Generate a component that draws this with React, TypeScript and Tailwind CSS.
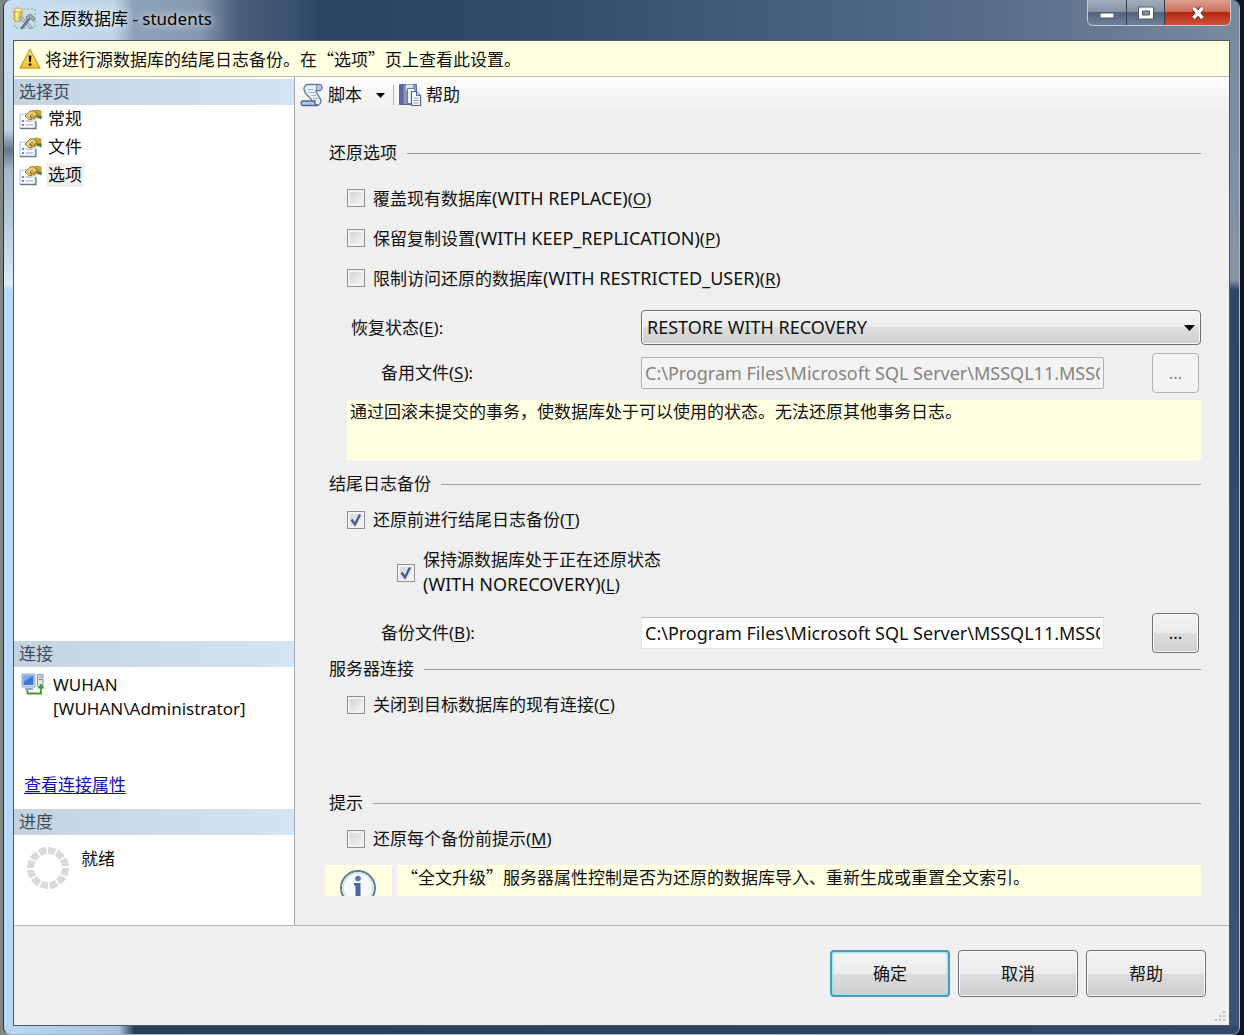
import { useState } from "react";
import type { ReactNode } from "react";

const BACKUP_PATH =
  "C:\\Program Files\\Microsoft SQL Server\\MSSQL11.MSSQLSERVER\\MSSQL\\Backup";

const pages = ["常规", "文件", "选项"];

const DatabaseToolsIcon = () => (
  <svg width="24" height="24" viewBox="0 0 24 24" className="shrink-0">
    <path d="M10 2h12v19H2v-7" fill="none" stroke="#6fbf6a" strokeDasharray="2 2" />
    <path d="M1 3v9c0 3 8 3 8 0V3z" fill="#e9b93c" stroke="#b98a22" strokeWidth="0.8" />
    <path d="M2.500 4v9c1 .8 2 .9 3 .9V4z" fill="#fbe9a0" />
    <ellipse cx="5" cy="3" rx="4" ry="2" fill="#fff0b5" stroke="#c79b35" strokeWidth="0.8" />
    <path d="M8 11l10 9.500" stroke="#7b858f" strokeWidth="3" strokeLinecap="round" />
    <path d="M8 11l10 9.500" stroke="#d3dae0" strokeWidth="1.400" strokeLinecap="round" />
    <path d="M9 21l7-9" stroke="#6d7782" strokeWidth="2.800" strokeLinecap="round" />
    <path d="M13 10c2-3 5-3 7-1l2 4-2 1-3-3-3 2z" fill="#a1abb5" stroke="#68727d" strokeWidth="0.8" />
  </svg>
);

const WarningIcon = () => (
  <svg width="22" height="22" viewBox="0 0 22 22" className="shrink-0">
    <defs>
      <linearGradient id="warn" x1="0" y1="0" x2="0" y2="1">
        <stop offset="0" stopColor="#ffec8a" />
        <stop offset="1" stopColor="#f0c020" />
      </linearGradient>
    </defs>
    <path
      d="M11 1.500L21 20H1z"
      fill="url(#warn)"
      stroke="#c9a13a"
      strokeWidth="1.300"
      strokeLinejoin="round"
    />
    <path d="M9.600 7.500h2.800l-.5 6.500h-1.800z" fill="#1c1800" />
    <circle cx="11" cy="16.600" r="1.400" fill="#1c1800" />
  </svg>
);

const PageIcon = () => (
  <svg width="23" height="21" viewBox="0 0 23 21" className="shrink-0">
    <path d="M1 5h15v14.500H1z" fill="#fbfcff" stroke="#b5bccb" />
    <path d="M1 19.500h16V12" fill="none" stroke="#6a7793" strokeWidth="1.300" />
    <path d="M3 12h2M3 16h2" stroke="#6c88c2" strokeWidth="2" />
    <path d="M6.500 12H14M6.500 16H14" stroke="#b3c0dc" strokeWidth="1.600" />
    <path d="M12 2l5-1.500 5.500 1v8L18 9l-4 2z" fill="#c4a23a" />
    <path d="M17 6.500h5.500v4L18 8.500z" fill="#4f7a35" />
    <path d="M6 7l5-5 3-.5 4 3.500-5 5.500H10z" fill="#e6cf6c" stroke="#8a6d1f" strokeWidth="0.900" />
    <path d="M10.500 7.500L13 5l2 2-2.500 2.500z" fill="#5a4a1c" />
    <circle cx="13" cy="7" r="1" fill="#f7efc0" />
  </svg>
);

const ScriptIcon = () => (
  <svg width="24" height="24" viewBox="0 0 24 24" className="shrink-0">
    <path
      d="M4 6c0-3 2-4.500 4-4.500h11c3 0 4 5 1 6h-4c0 3 4 7 5 10 0 3-2 4.500-3 4.500H9c3-1 3-4 2-6-2-3-7-5-7-10z"
      fill="#eaf0fa"
      stroke="#5d74a6"
      strokeWidth="1.300"
    />
    <path d="M17 7.500c-1.500-2-.5-6 2-6 3.500 0 4 5 1 6z" fill="#b9c8e4" stroke="#5d74a6" />
    <path d="M7.500 6.500h6M8.500 9.500h6M11 12.500h5M13 15.500h5" stroke="#9fb0d0" strokeWidth="1.200" />
    <path
      d="M3 18h12c-1 2 1 4.500 3 4.500H3c-2.500 0-2.500-4.500 0-4.500z"
      fill="#b4c5e6"
      stroke="#4c6396"
      strokeWidth="1.300"
    />
  </svg>
);

const HelpBookIcon = () => (
  <svg width="24" height="24" viewBox="0 0 24 24" className="shrink-0">
    <path d="M1.500 1.500h17v20h-17z" fill="#8794c4" stroke="#5a6799" />
    <path d="M1.500 1.500h4v20h-4z" fill="#5b69a3" />
    <path d="M8 1.500h7v6H8z" fill="#dbe3f5" />
    <path d="M9.500 5.500h6l3 3v12h-9z" fill="#eef3fc" stroke="#6377a8" />
    <path d="M13.500 8.500h5l4 4v10h-9z" fill="#fff" stroke="#4f6597" strokeWidth="1.200" />
    <path d="M18.500 8.500v4h4" fill="#c4d2ec" stroke="#4f6597" />
    <path d="M15.500 15h5M15.500 17.500h5M15.500 20h5" stroke="#8296c0" />
  </svg>
);

const ServerIcon = () => (
  <svg width="24" height="23" viewBox="0 0 24 23" className="shrink-0">
    <path d="M1 1h13v13H1z" fill="#d5e0f2" stroke="#8ea6d0" />
    <path d="M2.500 2.500h10v9.500h-10z" fill="#3e78d6" />
    <path d="M2.500 2.500h10L2.500 9z" fill="#7fabee" />
    <path d="M4 16h8" stroke="#8ea6d0" strokeWidth="2" />
    <path d="M16.500 1.500h5.500v12h-5.500z" fill="#dfe3ea" stroke="#8b93a3" />
    <path d="M18 4h3M18 6.500h3" stroke="#7a8394" />
    <path d="M6.500 17v3.500H20V14" fill="none" stroke="#3f9b35" strokeWidth="1.800" />
    <path d="M16.500 15.500L20 10.500l3.500 5z" fill="#3f9b35" />
  </svg>
);

const Spinner = () => (
  <svg width="42" height="42" viewBox="0 0 42 42" className="shrink-0">
    <circle
      cx="21"
      cy="21"
      r="17.500"
      fill="none"
      stroke="#d9d9d9"
      strokeWidth="7"
      pathLength="120"
      strokeDasharray="8 2"
    />
  </svg>
);

const InfoIcon = () => (
  <svg width="38" height="38" viewBox="0 0 38 38" className="shrink-0">
    <circle cx="19" cy="19" r="17" fill="#f7fafc" stroke="#5f7f92" strokeWidth="2" />
    <circle cx="19" cy="19" r="15" fill="none" stroke="#d5e0e8" strokeWidth="1.500" />
    <circle cx="19" cy="9.500" r="2.800" fill="#5a72b0" />
    <path d="M15 14h6.500v14h-5V16.500H15z" fill="#4a64a8" />
  </svg>
);

const Group = ({ title, className }: { title: string; className: string }) => (
  <div className={`flex items-center gap-2.5 h-6 ${className}`}>
    <h2>{title}</h2>
    <div className="flex-1 h-px bg-[#9b9b9b]" />
  </div>
);

const Key = ({ children }: { children: string }) => (
  <>
    (<u className="underline-offset-2">{children}</u>)
  </>
);

const Clause = ({ children }: { children: string }) => (
  <span className="text-[18px]">({children})</span>
);

interface CheckProps {
  children: ReactNode;
  defaultChecked?: boolean;
  className?: string;
}

const Check = ({ children, defaultChecked = false, className = "" }: CheckProps) => {
  const [checked, setChecked] = useState(defaultChecked);

  return (
    <label className={`flex items-center gap-2 w-fit leading-6 ${className}`}>
      <span className="relative flex shrink-0">
        <input
          type="checkbox"
          checked={checked}
          onChange={() => setChecked(!checked)}
          className="appearance-none size-[18px] border border-[#8e8f8f] bg-linear-to-br from-[#cfd1d3] to-[#f8f8f8] shadow-[inset_0_0_0_2px_#f2f2f2]"
        />
        {checked && (
          <svg
            viewBox="0 0 18 18"
            className="absolute inset-0 size-[18px] pointer-events-none"
          >
            <path
              d="M4.500 8.500l3.500 5L13 3.500"
              fill="none"
              stroke="#445a94"
              strokeWidth="2.400"
            />
          </svg>
        )}
      </span>
      <span>{children}</span>
    </label>
  );
};

const SideHeader = ({ children }: { children: string }) => (
  <h2 className="h-[26px] px-[5px] leading-[26px] text-[#3c4c5c] bg-linear-to-r from-[#c4d3e0] to-[#d5e4f2]">
    {children}
  </h2>
);

const buttonFace =
  "border border-[#707070] rounded-[4px] bg-[linear-gradient(#f3f3f3_0%,#ebebeb_50%,#dddddd_50%,#cfcfcf_100%)] shadow-[inset_0_0_0_1px_#fafafa]";

const TitleBar = () => (
  <header className="flex justify-between items-start h-10 pl-[9px] bg-[linear-gradient(to_right,#c9e0f2_0px,#bdd3e6_110px,#8da2b8_130px,#8599b0_195px,#4a5e7a_235px,#3a5070_290px,#2b4263_320px,#32486a_500px,#4a6284_850px,#5d708c_1020px,#7a8a9e_100%)]">
    <div className="flex items-center gap-1.5 h-[38px]">
      <DatabaseToolsIcon />
      <h1 className="text-black [text-shadow:0_0_8px_#ffffffcc,0_0_12px_#ffffff99]">
        还原数据库 - students
      </h1>
    </div>
    <div className="flex h-[26px] mr-2 border border-t-0 border-[#c3ccd8] rounded-b-md overflow-hidden">
      <button
        aria-label="最小化"
        className="flex items-center justify-center w-[39px] border-r border-[#303b4c] bg-[linear-gradient(#a3aebc_0%,#8390a2_50%,#53637a_50%,#70819a_100%)]"
      >
        <svg width="16" height="12" viewBox="0 0 16 12">
          <path d="M1 6h14v5H1z" fill="#fff" stroke="#4c5868" />
        </svg>
      </button>
      <button
        aria-label="最大化"
        className="flex items-center justify-center w-[38px] border-r border-[#303b4c] bg-[linear-gradient(#a3aebc_0%,#8390a2_50%,#53637a_50%,#70819a_100%)]"
      >
        <svg width="18" height="14" viewBox="0 0 18 14">
          <path d="M1.500 1h15v12h-15z" fill="#fff" stroke="#4c5868" />
          <path d="M5.500 5h7v4h-7z" fill="#8390a2" stroke="#4c5868" />
        </svg>
      </button>
      <button
        aria-label="关闭"
        className="flex items-center justify-center w-[65px] bg-[linear-gradient(#dfa093_0%,#cc6d5a_48%,#b3270f_50%,#cf5236_100%)]"
      >
        <svg width="16" height="14" viewBox="0 0 16 14">
          <path d="M3.500 2l9 10M12.500 2l-9 10" stroke="#5d2a25" strokeWidth="5.500" />
          <path d="M3.500 2l9 10M12.500 2l-9 10" stroke="#fff" strokeWidth="3.500" />
        </svg>
      </button>
    </div>
  </header>
);

const Sidebar = () => (
  <aside className="flex flex-col w-[281px] shrink-0 pt-0.5 bg-white border-r border-[#a8a8a8]">
    <SideHeader>选择页</SideHeader>
    <nav className="flex-1">
      {pages.map((page) => (
        <a key={page} href="#" className="flex items-center gap-1 h-7 px-[5px]">
          <PageIcon />
          <span
            className={
              page === "选项" ? "px-0.5 leading-6 bg-[#efefef]" : "px-0.5 leading-6"
            }
          >
            {page}
          </span>
        </a>
      ))}
    </nav>
    <SideHeader>连接</SideHeader>
    <section className="flex flex-col justify-between h-[142px] pt-1.5 pb-3">
      <div className="flex gap-2 px-[7px]">
        <ServerIcon />
        <p className="leading-6">
          WUHAN
          <br />
          [WUHAN\Administrator]
        </p>
      </div>
      <a href="#" className="px-2.5 leading-6 text-[#1010b0] underline underline-offset-2">
        查看连接属性
      </a>
    </section>
    <SideHeader>进度</SideHeader>
    <section className="flex gap-3 h-[90px] px-[13px] pt-3">
      <Spinner />
      <p className="leading-6">就绪</p>
    </section>
  </aside>
);

const Toolbar = () => (
  <div className="flex items-center h-9 px-[5px] bg-linear-to-b from-[#fdfdfd] to-[#efefef]">
    <button className="flex items-center gap-1">
      <ScriptIcon />
      脚本
      <svg width="9" height="5" viewBox="0 0 9 5" className="ml-2.5">
        <path d="M0 0h9L4.500 5z" fill="#000" />
      </svg>
    </button>
    <div className="w-px h-5 ml-2 mr-1 bg-[#b5b5b5]" />
    <button className="flex items-center gap-1">
      <HelpBookIcon />
      帮助
    </button>
  </div>
);

const Options = () => (
  <div className="pl-[34px] pr-7 pt-7">
    <Group title="还原选项" className="" />
    <div className="pl-[18px] pt-[13px]">
      <Check className="h-10">
        覆盖现有数据库
        <Clause>WITH REPLACE</Clause>
        <Key>O</Key>
      </Check>
      <Check className="h-10">
        保留复制设置
        <Clause>WITH KEEP_REPLICATION</Clause>
        <Key>P</Key>
      </Check>
      <Check className="h-10">
        限制访问还原的数据库
        <Clause>WITH RESTRICTED_USER</Clause>
        <Key>R</Key>
      </Check>
      <div className="flex items-center mt-3">
        <label htmlFor="state" className="w-[294px] pl-1">
          恢复状态
          <Key>E</Key>:
        </label>
        <div className="relative flex-1">
          <select
            id="state"
            className={`appearance-none block w-full h-[35px] pl-[5px] text-[18px] ${buttonFace}`}
          >
            <option>RESTORE WITH RECOVERY</option>
          </select>
          <svg
            width="11"
            height="6"
            viewBox="0 0 11 6"
            className="absolute right-1.5 top-[15px] pointer-events-none"
          >
            <path d="M0 0h11L5.500 6z" fill="#000" />
          </svg>
        </div>
      </div>
      <div className="flex items-center mt-2">
        <label htmlFor="standby" className="w-[294px] pl-[34px]">
          备用文件
          <Key>S</Key>:
        </label>
        <input
          id="standby"
          disabled
          defaultValue={BACKUP_PATH}
          className="flex-1 min-w-0 h-8 px-[3px] border border-[#afafaf] rounded-[2px] bg-[#f3f3f3] text-[18px] text-[#838383]"
        />
        <button
          disabled
          aria-label="浏览备用文件"
          className="w-[47px] h-10 ml-12 mr-0.5 border border-[#adb2b5] rounded-[4px] bg-[#f4f4f4] text-[#838383]"
        >
          ...
        </button>
      </div>
      <p className="h-[60px] mt-[7px] px-[3px] leading-6 bg-[#ffffe1]">
        通过回滚未提交的事务，使数据库处于可以使用的状态。无法还原其他事务日志。
      </p>
    </div>

    <Group title="结尾日志备份" className="mt-3" />
    <div className="pl-[18px] pt-3">
      <Check defaultChecked>
        还原前进行结尾日志备份
        <Key>T</Key>
      </Check>
      <Check defaultChecked className="mt-4 ml-[50px]">
        保持源数据库处于正在还原状态
        <br />
        <Clause>WITH NORECOVERY</Clause>
        <Key>L</Key>
      </Check>
      <div className="flex items-center mt-4">
        <label htmlFor="backup" className="w-[294px] pl-[34px]">
          备份文件
          <Key>B</Key>:
        </label>
        <input
          id="backup"
          defaultValue={BACKUP_PATH}
          className="flex-1 min-w-0 h-8 px-[3px] border border-[#e3e3e3] border-t-[#b5b8bd] bg-white text-[18px]"
        />
        <button
          aria-label="浏览备份文件"
          className={`w-[47px] h-10 ml-12 mr-0.5 ${buttonFace}`}
        >
          ...
        </button>
      </div>
    </div>

    <Group title="服务器连接" className="mt-1" />
    <Check className="mt-3 ml-[18px]">
      关闭到目标数据库的现有连接
      <Key>C</Key>
    </Check>

    <Group title="提示" className="mt-[74px]" />
    <Check className="mt-3 ml-[18px]">
      还原每个备份前提示
      <Key>M</Key>
    </Check>
    <div className="flex gap-[5px] h-[31px] mt-3.5 -ml-1">
      <div className="w-[67px] pt-1 pl-3.5 bg-[#ffffe1] overflow-hidden">
        <InfoIcon />
      </div>
      <p className="flex-1 px-1 leading-6 bg-[#ffffe1] font-['Noto_Sans_CJK_SC',sans-serif]">
        “全文升级”服务器属性控制是否为还原的数据库导入、重新生成或重置全文索引。
      </p>
    </div>
  </div>
);

const Footer = () => (
  <footer className="relative flex justify-end gap-2 h-[100px] pt-6 pr-[23px] border-t border-[#b4b4b8]">
    <button className="w-[120px] h-[47px] border-2 border-[#4d9bb8] rounded-[4px] bg-[linear-gradient(#f3f3f3_0%,#ebebeb_50%,#dddddd_50%,#cfcfcf_100%)] shadow-[inset_0_0_2px_1px_#8fe0fa]">
      确定
    </button>
    <button className={`w-[120px] h-[47px] ${buttonFace}`}>取消</button>
    <button className={`w-[120px] h-[47px] ${buttonFace}`}>帮助</button>
    <svg
      width="12"
      height="12"
      viewBox="0 0 12 12"
      className="absolute right-0.5 bottom-0.5"
    >
      <path
        d="M8 0h2v2H8zM4 4h2v2H4zM8 4h2v2H8zM0 8h2v2H0zM4 8h2v2H4zM8 8h2v2H8z"
        fill="#bdbdbd"
      />
    </svg>
  </footer>
);

export default function App() {
  return (
    <div className="min-h-screen flex flex-col pl-[3px] pr-1 bg-[linear-gradient(to_right,#7f8583_50%,#0c1624_50%)] text-[17px] text-[#111] font-['Noto_Sans','Noto_Sans_CJK_SC',sans-serif]">
      <div className="flex-1 flex flex-col border-x border-b border-l-[#27323e] border-r-[#a9bccf] border-b-[#9fb6cc] rounded-lg overflow-hidden">
        <TitleBar />
        <div className="flex-1 flex">
          <div className="w-[9px] bg-[linear-gradient(#c9e0f2_0px,#c0d4e6_90px,#66788a_110px,#a3b8ca_130px,#b4cadd_180px,#dbecf8_245px,#b9d8f4_250px,#b9d8f4_100%)]" />
          <main className="flex-1 min-w-0 flex flex-col border border-[#4a5868] bg-[#efefef]">
            <div className="flex items-center gap-1 h-9 px-[5px] border-b border-[#b9bba5] bg-[#ffffe1] font-['Noto_Sans_CJK_SC',sans-serif]">
              <WarningIcon />
              <p>将进行源数据库的结尾日志备份。在“选项”页上查看此设置。</p>
            </div>
            <div className="flex-1 flex">
              <Sidebar />
              <section className="flex-1 min-w-0">
                <Toolbar />
                <Options />
              </section>
            </div>
            <Footer />
          </main>
          <div className="w-[9px] bg-[linear-gradient(#7b8a9e_0px,#8593a5_240px,#2f4562_250px,#3c5474_100%)]" />
        </div>
        <div className="h-2 bg-[linear-gradient(to_right,#b9d8f4_0px,#a9c2dc_115px,#2b3c56_130px,#33486a_100%)]" />
      </div>
    </div>
  );
}
